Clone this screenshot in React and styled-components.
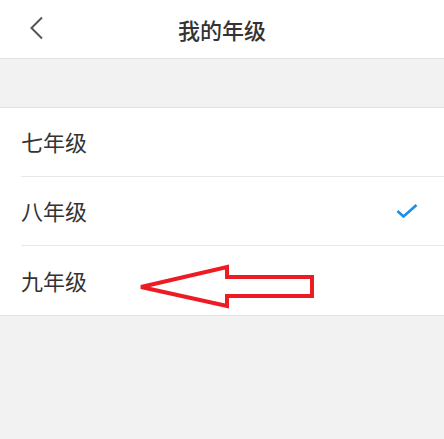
import React from 'react'
import styled, { createGlobalStyle } from 'styled-components'

const GlobalStyle = createGlobalStyle`
  html, body {
    margin: 0;
    padding: 0;
    background: #f2f2f2;
  }
  body {
    font-family: "Noto Sans CJK SC", "Noto Sans", sans-serif;
  }
`

const Page = styled.div`
  position: relative;
  width: 444px;
  min-height: 439px;
  background: #f2f2f2;
`

const Header = styled.header`
  position: relative;
  height: 58px;
  background: #fff;
  border-bottom: 1px solid #e2e2e2;
  display: flex;
  align-items: center;
  justify-content: center;
`

const BackButton = styled.button`
  position: absolute;
  left: 22px;
  top: 10px;
  width: 30px;
  height: 36px;
  padding: 0;
  border: none;
  background: none;
  display: flex;
  align-items: center;
  justify-content: center;
`

const Title = styled.h1`
  margin: 0 0 1px;
  font-size: 22px;
  line-height: 1;
  font-weight: 500;
  color: #333;
`

const Spacer = styled.div`
  height: 48px;
`

const List = styled.ul`
  margin: 0;
  padding: 0 0 0 21px;
  list-style: none;
  background: #fff;
  border-top: 1px solid #e2e2e2;
  border-bottom: 1px solid #e2e2e2;
`

const Row = styled.li`
  height: ${({ $last }) => ($last ? 69 : 68)}px;
  display: flex;
  align-items: center;
  justify-content: space-between;
  padding-right: 26px;
  font-size: 22px;
  line-height: 1;
  color: #333;
  border-bottom: ${({ $last }) => ($last ? 'none' : '1px solid #e8e8e8')};
`

const Label = styled.span`
  margin-bottom: 2px;
`

const Overlay = styled.svg`
  position: absolute;
  left: 0;
  top: 0;
  pointer-events: none;
`

const grades = [
  { name: '七年级' },
  { name: '八年级', selected: true },
  { name: '九年级' },
]

const Check = () => (
  <svg width="22" height="14" viewBox="0 0 22 14">
    <path d="M1.5 7 L7.5 12.5 L20.5 1" fill="none" stroke="#1a8fe6" strokeWidth="2.6" />
  </svg>
)

const App = () => (
  <Page>
    <GlobalStyle />
    <Header>
      <BackButton aria-label="返回">
        <svg width="16" height="24" viewBox="0 0 16 24">
          <path d="M13 1.5 L2.5 12 L13 22.5" fill="none" stroke="#555" strokeWidth="2" />
        </svg>
      </BackButton>
      <Title>我的年级</Title>
    </Header>
    <Spacer />
    <List>
      {grades.map((g, i) => (
        <Row key={g.name} $last={i === grades.length - 1}>
          <Label>{g.name}</Label>
          {g.selected && <Check />}
        </Row>
      ))}
    </List>
    <Overlay width="444" height="439">
      <polygon
        points="141,287 227,267 227,277 312,277 312,296 227,296 227,306"
        fill="none"
        stroke="#ed1c24"
        strokeWidth="4"
      />
    </Overlay>
  </Page>
)

export default App
